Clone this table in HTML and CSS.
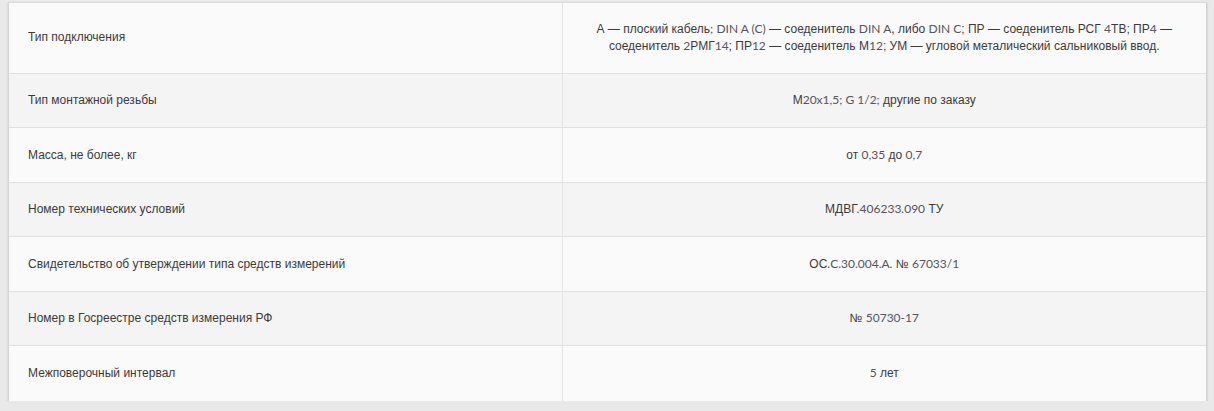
FILE: index.html
```html
<!DOCTYPE html>
<html lang="ru">
<head>
<meta charset="utf-8">
<link rel="stylesheet" href="styles.css">
</head>
<body>
<div class="card">
<table class="specs">
<tr class="odd">
<td class="name">Тип подключения</td>
<td class="val">А — плоский кабель<span class="l">;</span> <span class="l">DIN A (C)</span> — соеденитель <span class="l">DIN A</span>, либо <span class="l">DIN C</span>; ПР — соеденитель РСГ <span class="l">4</span>ТВ; ПР<span class="l">4</span>&nbsp;— соеденитель <span class="l">2</span>РМГ<span class="l">14</span>; ПР<span class="l">12</span> — соеденитель М<span class="l">12</span>; УМ — угловой металический сальниковый ввод.</td>
</tr>
<tr class="even">
<td class="name">Тип монтажной резьбы</td>
<td class="val">М<span class="l">20x1,5; G 1/2;</span> другие по заказу</td>
</tr>
<tr class="odd">
<td class="name">Масса, не более, кг</td>
<td class="val">от <span class="l">0,35</span> до <span class="l">0,7</span></td>
</tr>
<tr class="even">
<td class="name">Номер технических условий</td>
<td class="val">МДВГ.<span class="l">406233.090</span> ТУ</td>
</tr>
<tr class="odd">
<td class="name">Свидетельство об утверждении типа средств измерений</td>
<td class="val">ОС<span class="l">.C.30.004.A.</span> № <span class="l">67033/1</span></td>
</tr>
<tr class="even">
<td class="name">Номер в Госреестре средств измерения РФ</td>
<td class="val">№ <span class="l">50730-17</span></td>
</tr>
<tr class="odd">
<td class="name">Межповерочный интервал</td>
<td class="val"><span class="l">5</span> лет</td>
</tr>
</table>
</div>
</body>
</html>
```
FILE: styles.css
```css
html, body {
  margin: 0;
  padding: 0;
  background: #e9e9e9;
}
body {
  padding: 2px 7px 0 8px;
  font-family: "Liberation Sans", Arial, sans-serif;
  font-size: 12px;
  color: #3a3a3a;
}
.card {
  background: #fafafa;
  border-top: 1px solid #dcdcdc;
  border-left: 1px solid #d6d6d6;
  border-right: 1px solid #d2d2d2;
  box-shadow: 0 1px 2px rgba(0,0,0,0.18);
}
.specs {
  width: 100%;
  border-collapse: collapse;
  table-layout: fixed;
}
.specs td {
  height: 54.6px;
  padding: 0 20px;
  line-height: 16.7px;
  vertical-align: middle;
  box-sizing: border-box;
  border-top: 1px solid #e0e0e0;
}
.specs tr:first-child td {
  border-top: none;
  height: 70px;
}
.specs .name {
  width: 553px;
  border-right: 1px solid #e4e4e4;
  padding-left: 19px;
}
.specs .val {
  text-align: center;
  padding: 0 16px;
}
.odd { background: #fafafa; }
.even { background: #f4f4f4; }
.l {
  font-family: Lato, "Liberation Sans", sans-serif;
  font-weight: 400;
  color: #55555c;
}
```
